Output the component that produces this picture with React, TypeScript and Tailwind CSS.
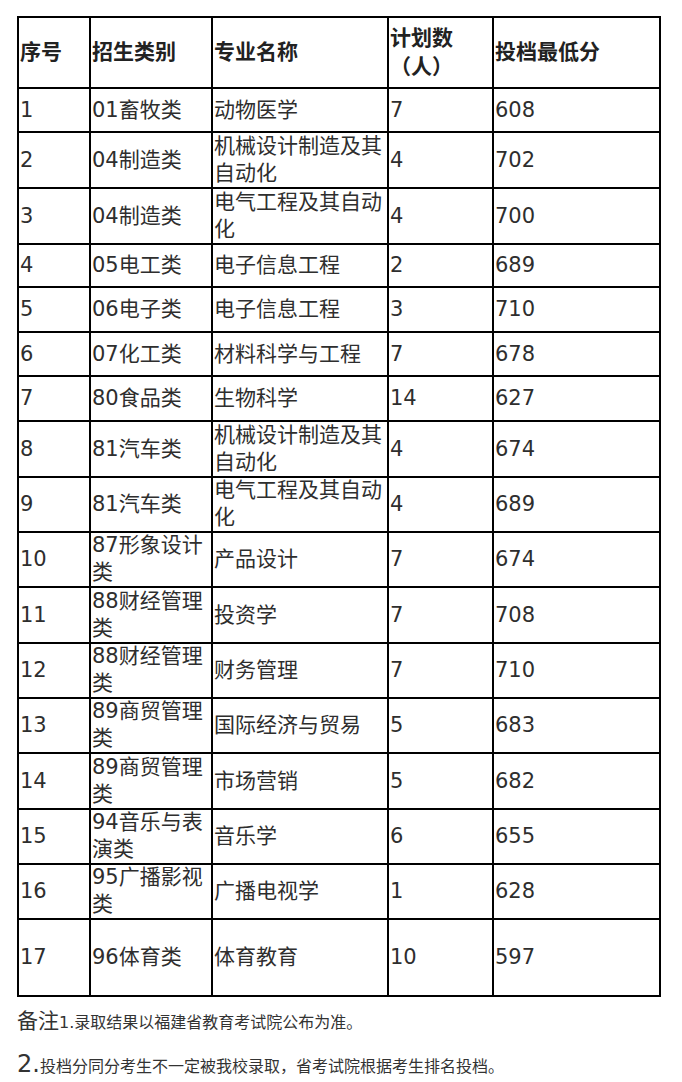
type Row = { h: string; cells: string[] }

const rows: Row[] = [
  { h: "h-[44px]", cells: ["1", "01畜牧类", "动物医学", "7", "608"] },
  { h: "h-[56px]", cells: ["2", "04制造类", "机械设计制造及其自动化", "4", "702"] },
  { h: "h-[55px]", cells: ["3", "04制造类", "电气工程及其自动化", "4", "700"] },
  { h: "h-[44px]", cells: ["4", "05电工类", "电子信息工程", "2", "689"] },
  { h: "h-[45px]", cells: ["5", "06电子类", "电子信息工程", "3", "710"] },
  { h: "h-[44px]", cells: ["6", "07化工类", "材料科学与工程", "7", "678"] },
  { h: "h-[45px]", cells: ["7", "80食品类", "生物科学", "14", "627"] },
  { h: "h-[55px]", cells: ["8", "81汽车类", "机械设计制造及其自动化", "4", "674"] },
  { h: "h-[55px]", cells: ["9", "81汽车类", "电气工程及其自动化", "4", "689"] },
  { h: "h-[56px]", cells: ["10", "87形象设计类", "产品设计", "7", "674"] },
  { h: "h-[55px]", cells: ["11", "88财经管理类", "投资学", "7", "708"] },
  { h: "h-[55px]", cells: ["12", "88财经管理类", "财务管理", "7", "710"] },
  { h: "h-[56px]", cells: ["13", "89商贸管理类", "国际经济与贸易", "5", "683"] },
  { h: "h-[55px]", cells: ["14", "89商贸管理类", "市场营销", "5", "682"] },
  { h: "h-[55px]", cells: ["15", "94音乐与表演类", "音乐学", "6", "655"] },
  { h: "h-[55px]", cells: ["16", "95广播影视类", "广播电视学", "1", "628"] },
  { h: "h-[78px]", cells: ["17", "96体育类", "体育教育", "10", "597"] },
]

const headers = ["序号", "招生类别", "专业名称", "计划数（人）", "投档最低分"]

const grid = "grid grid-cols-[72px_122px_176px_105px_167px]"
const cell = "flex items-center pl-px pr-0.5 border-r-2 border-b-2 border-black"

export default function App() {
  return (
    <div className="w-[682px] h-[1082px] bg-white pt-4 pl-[17px] font-['DejaVu_Sans','Noto_Sans_CJK_SC',sans-serif] text-[#2e2e2e]">
      <div className="w-[644px] border-l-2 border-t-2 border-black">
        <div className={`${grid} h-[71px]`}>
          {headers.map((h) => (
            <div
              key={h}
              className={`${cell} text-[21px] leading-[29px] font-bold text-[#222]`}
            >
              <span>{h}</span>
            </div>
          ))}
        </div>
        {rows.map((r) => (
          <div key={r.cells[0]} className={`${grid} ${r.h}`}>
            {r.cells.map((c, i) => (
              <div key={i} className={`${cell} text-[21px] leading-[27px]`}>
                <span>{c}</span>
              </div>
            ))}
          </div>
        ))}
      </div>

      <div className="mt-3 flex flex-col gap-[17px] text-[#333]">
        <p className="flex items-baseline leading-[24px]">
          <span className="text-[21px]">备注</span>
          <span className="text-[16px]">1.录取结果以福建省教育考试院公布为准。</span>
        </p>
        <p className="flex items-baseline leading-[24px]">
          <span className="text-[24px]">2.</span>
          <span className="text-[16px]">投档分同分考生不一定被我校录取，省考试院根据考生排名投档。</span>
        </p>
      </div>
    </div>
  )
}
